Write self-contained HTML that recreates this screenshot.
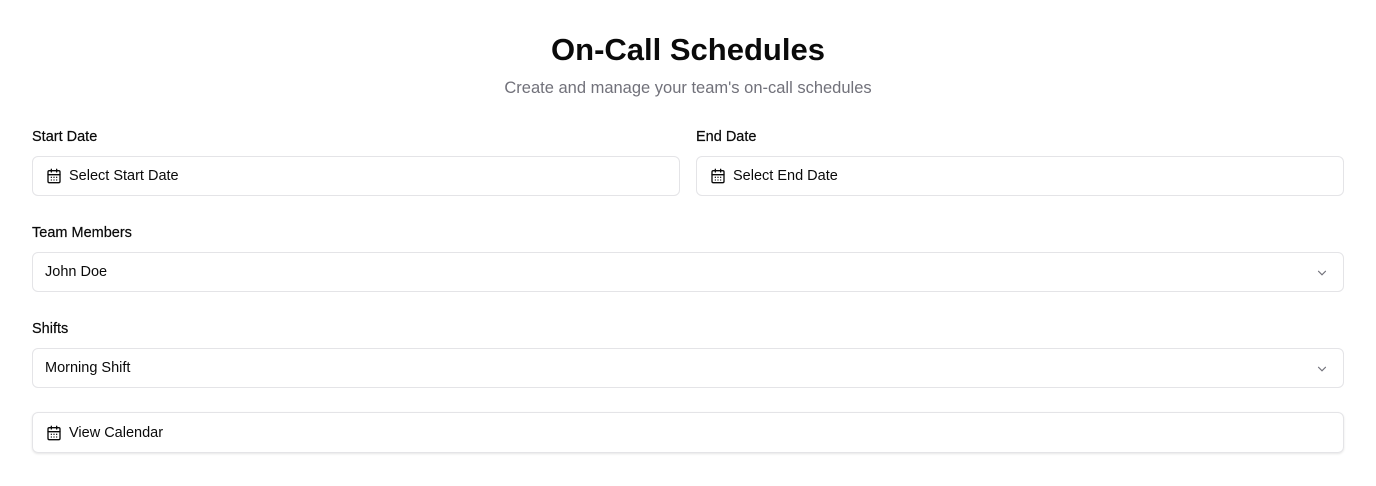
<!DOCTYPE html>
<html><head><style>
body{margin:0;background:#fff;font-family:"Liberation Sans",sans-serif;color:#0a0a0a;}
.h1{position:absolute;top:30px;left:0;width:1376px;text-align:center;font-size:31px;font-weight:bold;line-height:40px;}
.sub{position:absolute;top:77px;left:0;width:1376px;text-align:center;font-size:16.5px;color:#71717a;line-height:22px;}
.lbl{position:absolute;font-size:14.5px;font-weight:500;line-height:20px;-webkit-text-stroke:0.2px #0a0a0a;}
.box{position:absolute;height:38px;border:1px solid #e4e4e7;border-radius:6px;box-sizing:content-box;font-size:14.5px;line-height:38px;display:flex;align-items:center;}
.box svg{margin-left:13px;margin-right:7px;}
.chev{position:absolute;right:7px;top:13px;}
</style></head><body>
<div class="h1">On-Call Schedules</div>
<div class="sub">Create and manage your team's on-call schedules</div>
<div class="lbl" style="left:32px;top:127px">Start Date</div>
<div class="lbl" style="left:696px;top:127px">End Date</div>
<div class="box" style="left:32px;top:156px;width:646px"><svg width="16" height="16" viewBox="0 0 24 24" fill="none" stroke="#0a0a0a" stroke-width="2" stroke-linecap="round"><rect x="3" y="4" width="18" height="18" rx="2"/><path d="M16 2v4M8 2v4M3 10h18M8 14h.01M12 14h.01M16 14h.01M8 18h.01M12 18h.01M16 18h.01"/></svg>Select Start Date</div>
<div class="box" style="left:696px;top:156px;width:646px"><svg width="16" height="16" viewBox="0 0 24 24" fill="none" stroke="#0a0a0a" stroke-width="2" stroke-linecap="round"><rect x="3" y="4" width="18" height="18" rx="2"/><path d="M16 2v4M8 2v4M3 10h18M8 14h.01M12 14h.01M16 14h.01M8 18h.01M12 18h.01M16 18h.01"/></svg>Select End Date</div>
<div class="lbl" style="left:32px;top:223px">Team Members</div>
<div class="box" style="left:32px;top:252px;width:1310px"><span style="margin-left:12px">John Doe</span><svg class="chev" width="14" height="14" viewBox="0 0 24 24" fill="none" stroke="#71717a" stroke-width="2" stroke-linecap="round"><path d="M6 9l6 6 6-6"/></svg></div>
<div class="lbl" style="left:32px;top:319px">Shifts</div>
<div class="box" style="left:32px;top:348px;width:1310px"><span style="margin-left:12px">Morning Shift</span><svg class="chev" width="14" height="14" viewBox="0 0 24 24" fill="none" stroke="#71717a" stroke-width="2" stroke-linecap="round"><path d="M6 9l6 6 6-6"/></svg></div>
<div class="box" style="left:32px;top:412px;width:1310px;height:39px;box-shadow:0 1px 2px rgba(0,0,0,.1)"><svg width="16" height="16" viewBox="0 0 24 24" fill="none" stroke="#0a0a0a" stroke-width="2" stroke-linecap="round"><rect x="3" y="4" width="18" height="18" rx="2"/><path d="M16 2v4M8 2v4M3 10h18M8 14h.01M12 14h.01M16 14h.01M8 18h.01M12 18h.01M16 18h.01"/></svg>View Calendar</div>
</body></html>
